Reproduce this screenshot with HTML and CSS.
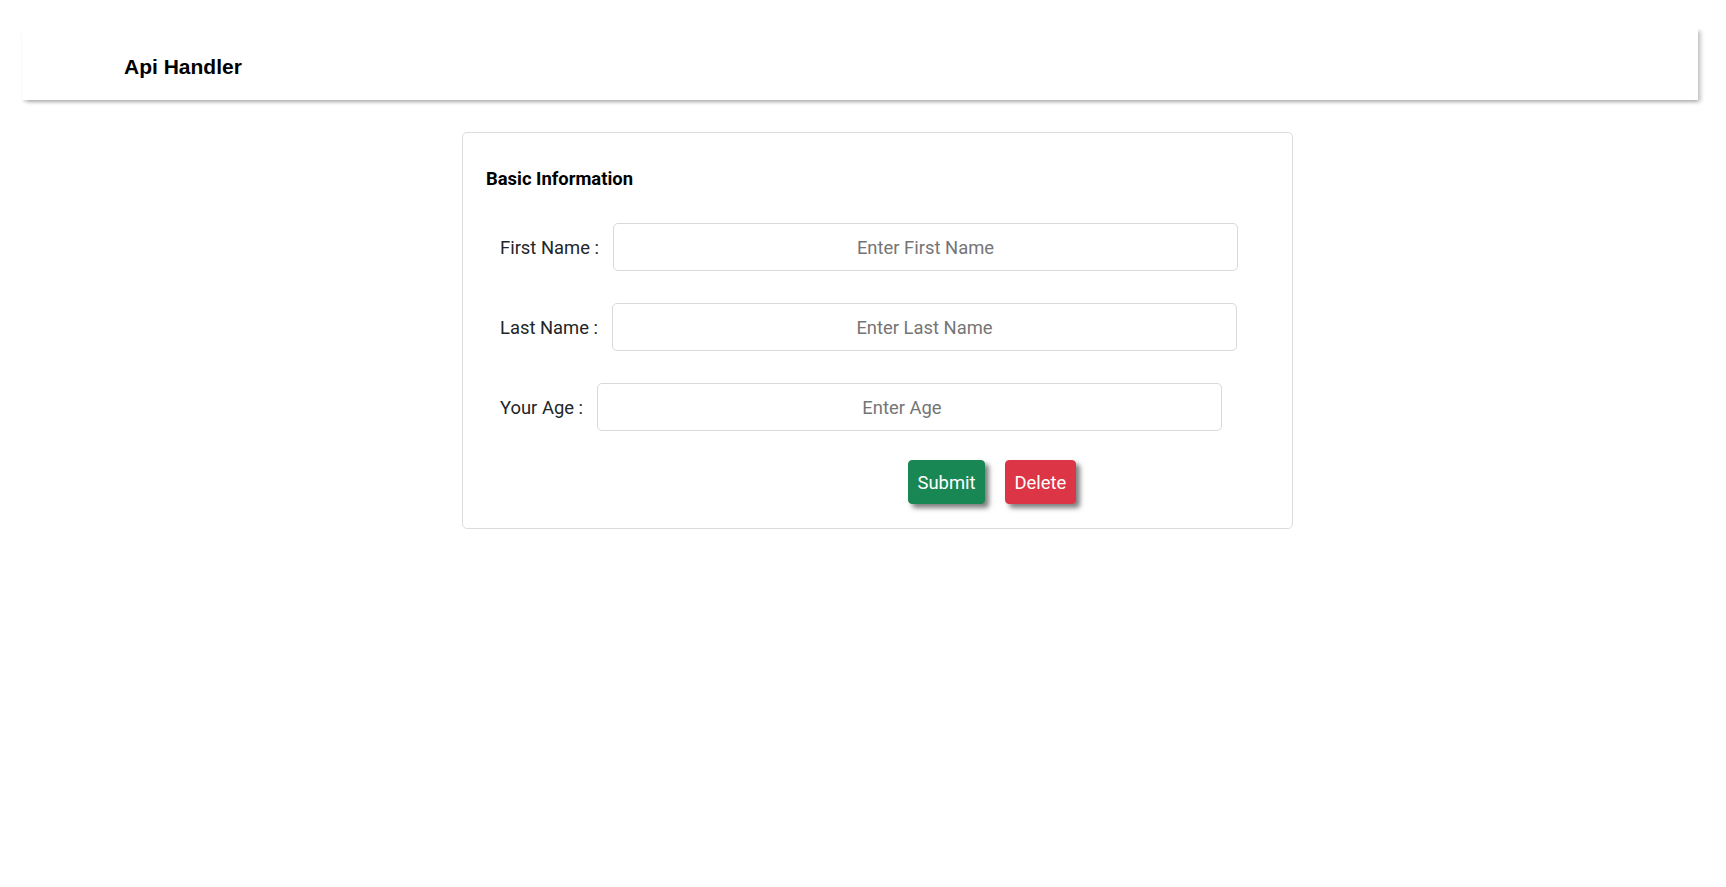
FILE: index.html
```html
<!DOCTYPE html>
<html lang="en">
<head>
<meta charset="utf-8">
<title>Api Handler</title>
<link rel="stylesheet" href="styles.css">
</head>
<body>
  <header class="topbar">
    <h1 class="brand">Api Handler</h1>
  </header>
  <main class="card">
    <h2 class="card-title">Basic Information</h2>
    <form class="form">
      <div class="row">
        <label class="label" for="fn">First Name :</label>
        <input class="field" id="fn" type="text" placeholder="Enter First Name">
      </div>
      <div class="row">
        <label class="label" for="ln">Last Name :</label>
        <input class="field" id="ln" type="text" placeholder="Enter Last Name">
      </div>
      <div class="row">
        <label class="label" for="age">Your Age :</label>
        <input class="field" id="age" type="number" placeholder="Enter Age">
      </div>
      <div class="actions">
        <button class="btn btn-submit" type="button">Submit</button>
        <button class="btn btn-delete" type="button">Delete</button>
      </div>
    </form>
  </main>
</body>
</html>
```
FILE: styles.css
```css
* { box-sizing: border-box; }
html, body { background: #fff; }
body {
  margin: 0;
  font-family: Roboto, "Liberation Sans", Arial, sans-serif;
  color: #212529;
}
.topbar {
  margin: 27px 28px 0 22px;
  height: 73px;
  background: #fff;
  box-shadow: 4px 3px 4px -1px rgba(0,0,0,0.22), 0 3px 3px -1px rgba(0,0,0,0.14);
  display: flex;
  align-items: center;
  padding-left: 102px;
}
.brand {
  margin: 0;
  font-family: "Liberation Sans", Arial, sans-serif;
  font-size: 21px;
  font-weight: 700;
  color: #000;
  padding-top: 7px;
}
.card {
  display: block;
  margin: 32px 0 0 462px;
  width: 831px;
  border: 1px solid #dcdcdc;
  border-radius: 5px;
  padding: 23px 23px 24px;
}
.card-title {
  margin: 12px 0 0;
  font-size: 18.4px;
  font-weight: 700;
  color: #000;
}
.form {
  display: flex;
  flex-direction: column;
  gap: 32px;
  margin-top: 34px;
}
.row {
  display: flex;
  align-items: center;
  padding-left: 14px;
}
.label {
  font-size: 18.4px;
  color: #212529;
  margin-right: 14px;
}
.field {
  width: 625px;
  height: 48px;
  border: 1px solid #d9d9d9;
  border-radius: 5px;
  font-family: Roboto, "Liberation Sans", Arial, sans-serif;
  font-size: 18.4px;
  text-align: center;
  color: #212529;
  outline: none;
}
.field::placeholder { color: #757575; }
.actions {
  display: flex;
  gap: 20px;
  padding-left: 422px;
  margin-top: -3px;
}
.btn {
  height: 44px;
  padding: 0 8.5px;
  border: 1px solid transparent;
  border-radius: 4px;
  font-family: Roboto, "Liberation Sans", Arial, sans-serif;
  font-size: 18.4px;
  color: #fff;
  box-shadow: 4px 4px 5px rgba(0,0,0,0.5);
  cursor: pointer;
}
.btn-submit { background: #198754; border-color: #198754; }
.btn-delete { background: #dc3545; border-color: #dc3545; }
```
